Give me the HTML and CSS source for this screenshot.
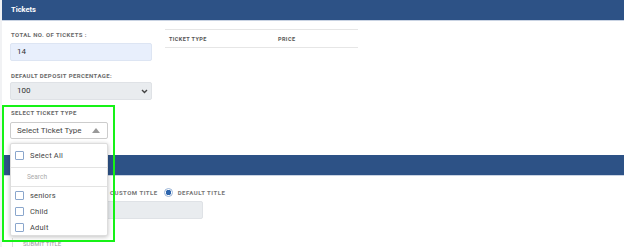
FILE: index.html
```html
<!DOCTYPE html>
<html lang="en">
<head>
    <meta charset="UTF-8">
    <meta name="viewport" content="width=device-width, initial-scale=1.0">
    <title>Tickets</title>
    <link rel="stylesheet" href="styles.css">
</head>
<body>
    <div class="card">
        <div class="card-head">Tickets</div>
        <div class="card-body">
            <div class="left-col">
                <label class="field-label">Total No. of Tickets :</label>
                <div class="input input-blue">14</div>

                <label class="field-label">Default Deposit Percentage:</label>
                <div class="input input-gray select-box">
                    <span>100</span>
                    <svg class="chev" width="7" height="5" viewBox="0 0 7 5"><path d="M1 1l2.5 2.5L6 1" fill="none" stroke="#444" stroke-width="1.4"/></svg>
                </div>

                <label class="field-label">Select Ticket Type</label>
                <div class="multi">
                    <div class="multi-btn">
                        <span>Select Ticket Type</span>
                        <svg width="8" height="5" viewBox="0 0 8 5"><path d="M0 5L4 0l4 5z" fill="#999"/></svg>
                    </div>
                    <div class="dropdown">
                        <div class="opt opt-all"><span class="check"></span>Select All</div>
                        <div class="search">Search</div>
                        <div class="opt"><span class="check"></span>seniors</div>
                        <div class="opt"><span class="check"></span>Child</div>
                        <div class="opt"><span class="check"></span>Adult</div>
                    </div>
                </div>
            </div>

            <table class="tickets-table">
                <thead>
                    <tr><th class="col-type">Ticket Type</th><th>Price</th></tr>
                </thead>
            </table>
        </div>
    </div>

    <div class="card">
        <div class="card-head">&nbsp;</div>
        <div class="card-body-two">
            <div class="radio-row">
                <span class="radio"></span><span class="radio-label">Custom Title</span>
                <span class="radio radio-on"></span><span class="radio-label">Default Title</span>
            </div>
            <div class="input input-gray title-input"></div>
            <div class="bottom-row">
                <div class="submit">Submit Title</div>
                <div class="preview"></div>
            </div>
        </div>
    </div>

    <div class="highlight"></div>
</body>
</html>
```

FILE: styles.css
```css
body {
    margin: 0;
    font-family: Roboto, "Liberation Sans", sans-serif;
    background: #fff;
    position: relative;
    border-left: 2px solid #f1f2f4;
    height: 247px;
    overflow: hidden;
}

.card-head {
    background: #2d5286;
    color: #fff;
    font-size: 7.5px;
    font-weight: bold;
    height: 21px;
    line-height: 20px;
    padding-left: 9px;
    border-bottom: 1px solid #c9d3e3;
    box-sizing: border-box;
}

.card-body {
    display: flex;
    padding: 10px 0 0 8px;
    height: 134px;
    box-sizing: border-box;
}

.left-col {
    width: 142px;
    display: flex;
    flex-direction: column;
}

.field-label {
    display: block;
    font-size: 6px;
    font-weight: bold;
    letter-spacing: 0.4px;
    text-transform: uppercase;
    color: #6a6a6a;
    padding-left: 1px;
    height: 8px;
    line-height: 8px;
    margin-bottom: 4px;
}

.input {
    height: 18px;
    border-radius: 2px;
    box-sizing: border-box;
    font-size: 8px;
    line-height: 16px;
    padding-left: 6px;
    color: #333;
    margin-bottom: 11px;
}

.input-blue {
    background: #e8effc;
    border: 1px solid #dde5f3;
}

.input-gray {
    background: #e9ecef;
    border: 1px solid #dfe2e6;
}

.select-box {
    display: flex;
    justify-content: space-between;
    align-items: center;
    padding-right: 3px;
    margin-top: -2px;
    margin-bottom: 9px;
}

.multi {
    position: relative;
    width: 98px;
    margin-top: 1px;
}

.multi-btn {
    height: 17px;
    border: 1px solid #ccc;
    border-radius: 2px;
    box-sizing: border-box;
    display: flex;
    align-items: center;
    justify-content: space-between;
    padding: 0 7px 0 6px;
    font-size: 8px;
    color: #444;
}

.dropdown {
    position: absolute;
    top: 21px;
    left: 0;
    width: 98px;
    background: #fff;
    border: 1px solid #ddd;
    border-radius: 2px;
    box-shadow: 0 1px 4px rgba(0, 0, 0, 0.25);
    box-sizing: border-box;
    z-index: 5;
}

.opt {
    display: flex;
    align-items: center;
    height: 16px;
    font-size: 7.5px;
    color: #444;
    padding-left: 4px;
    letter-spacing: 0.2px;
}

.opt-all {
    height: 23px;
}

.check {
    width: 7px;
    height: 7px;
    border: 1px solid #8aa6cc;
    border-radius: 1px;
    margin-right: 6px;
}

.search {
    border-top: 1px solid #e3e3e3;
    border-bottom: 1px solid #e3e3e3;
    height: 20px;
    box-sizing: border-box;
    line-height: 19px;
    font-size: 6.5px;
    color: #aaa;
    padding-left: 16px;
}

.tickets-table {
    margin: -2px 0 0 13px;
    width: 193px;
    border-collapse: collapse;
    align-self: flex-start;
}

.tickets-table th {
    text-align: left;
    font-size: 5.5px;
    font-weight: bold;
    letter-spacing: 0.4px;
    text-transform: uppercase;
    color: #555;
    height: 17px;
    padding: 0 0 0 4px;
    border-top: 1px solid #e6e6e6;
    border-bottom: 1px solid #e6e6e6;
}

.tickets-table .col-type {
    width: 105px;
}

.card-body-two {
    padding: 12px 0 0 80px;
}

.radio-row {
    display: flex;
    align-items: center;
    height: 9px;
    padding-left: 14px;
}

.radio {
    width: 7px;
    height: 7px;
    border: 1px solid #9ab4d6;
    border-radius: 50%;
    margin-right: 5px;
    box-sizing: content-box;
}

.radio-on {
    background: radial-gradient(circle, #2d65ad 2.5px, #fff 3px);
}

.radio-label {
    font-size: 6px;
    font-weight: bold;
    letter-spacing: 0.5px;
    text-transform: uppercase;
    color: #777;
    margin-right: 6px;
}

.title-input {
    width: 121px;
    height: 18px;
    margin: 4px 0 0 0;
}

.bottom-row {
    display: flex;
    margin: 19px 0 0 -70px;
}

.submit {
    font-size: 6px;
    color: #999;
    text-transform: uppercase;
    border-left: 1px solid #ddd;
    padding: 0 0 0 10px;
    width: 47px;
    height: 12px;
    line-height: 12px;
}

.preview {
    flex: 1;
    border-left: 1px solid #e3e3e3;
    border-top: 1px solid #e3e3e3;
    margin-top: 9px;
    margin-right: 6px;
    height: 10px;
}

.highlight {
    position: absolute;
    left: 0;
    top: 105px;
    width: 109px;
    height: 133px;
    border: 2px solid #16f216;
    z-index: 10;
}
```
